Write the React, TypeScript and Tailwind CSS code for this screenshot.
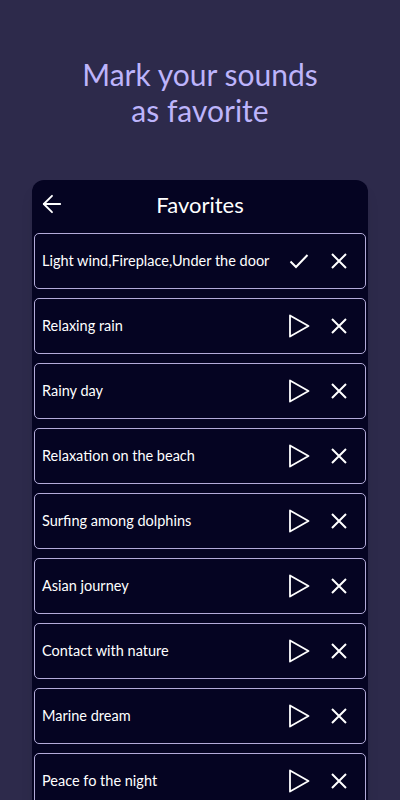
import { ArrowLeft } from "lucide-react";

const sounds = [
  "Light wind,Fireplace,Under the door",
  "Relaxing rain",
  "Rainy day",
  "Relaxation on the beach",
  "Surfing among dolphins",
  "Asian journey",
  "Contact with nature",
  "Marine dream",
  "Peace fo the night",
];

const PlayIcon = () => (
  <svg width="22" height="24" viewBox="0 0 22 24" fill="none">
    <path d="M2 1.5 L20.5 12 L2 22.5 Z" stroke="white" strokeWidth="1.8" strokeLinejoin="round" />
  </svg>
);

const CheckIcon = () => (
  <svg width="20" height="16" viewBox="0 0 20 16" fill="none">
    <path d="M1.5 8.5 L7 14 L18.5 2" stroke="white" strokeWidth="2" />
  </svg>
);

const CloseIcon = () => (
  <svg width="18" height="18" viewBox="0 0 18 18" fill="none">
    <path d="M2 2 L16 16 M16 2 L2 16" stroke="white" strokeWidth="2" />
  </svg>
);

const App = () => {
  return (
    <div
      className="w-[400px] h-[800px] overflow-hidden bg-[#2d2a4b] flex flex-col items-center"
      style={{ fontFamily: "Lato, 'Open Sans', sans-serif" }}
    >
      <h1 className="mt-[56px] text-center text-[30px] leading-[36px] text-[#bdb4fb]">
        Mark your sounds
        <br />
        as favorite
      </h1>

      <div className="mt-[52px] w-[336px] flex-1 rounded-t-[12px] bg-[#050422] px-[2px] shadow-lg">
        <div className="relative h-[53px] flex items-center justify-center">
          <ArrowLeft className="absolute left-[4px] top-[10px] text-white" size={28} strokeWidth={1.6} />
          <span className="-mt-[4px] text-[22px] text-white">Favorites</span>
        </div>

        <div className="flex flex-col gap-[9px]">
          {sounds.map((name, i) => (
            <div
              key={name}
              className="h-[56px] flex items-center justify-between rounded-[5px] border border-[#b3abd9] pl-[7px] pr-[17px]"
            >
              <span className="text-[14.5px] text-white whitespace-nowrap">{name}</span>
              <div className="flex items-center gap-[20px]">
                <div className="w-[22px] flex justify-center">{i === 0 ? <CheckIcon /> : <PlayIcon />}</div>
                <CloseIcon />
              </div>
            </div>
          ))}
        </div>
      </div>
    </div>
  );
};

export default App;
